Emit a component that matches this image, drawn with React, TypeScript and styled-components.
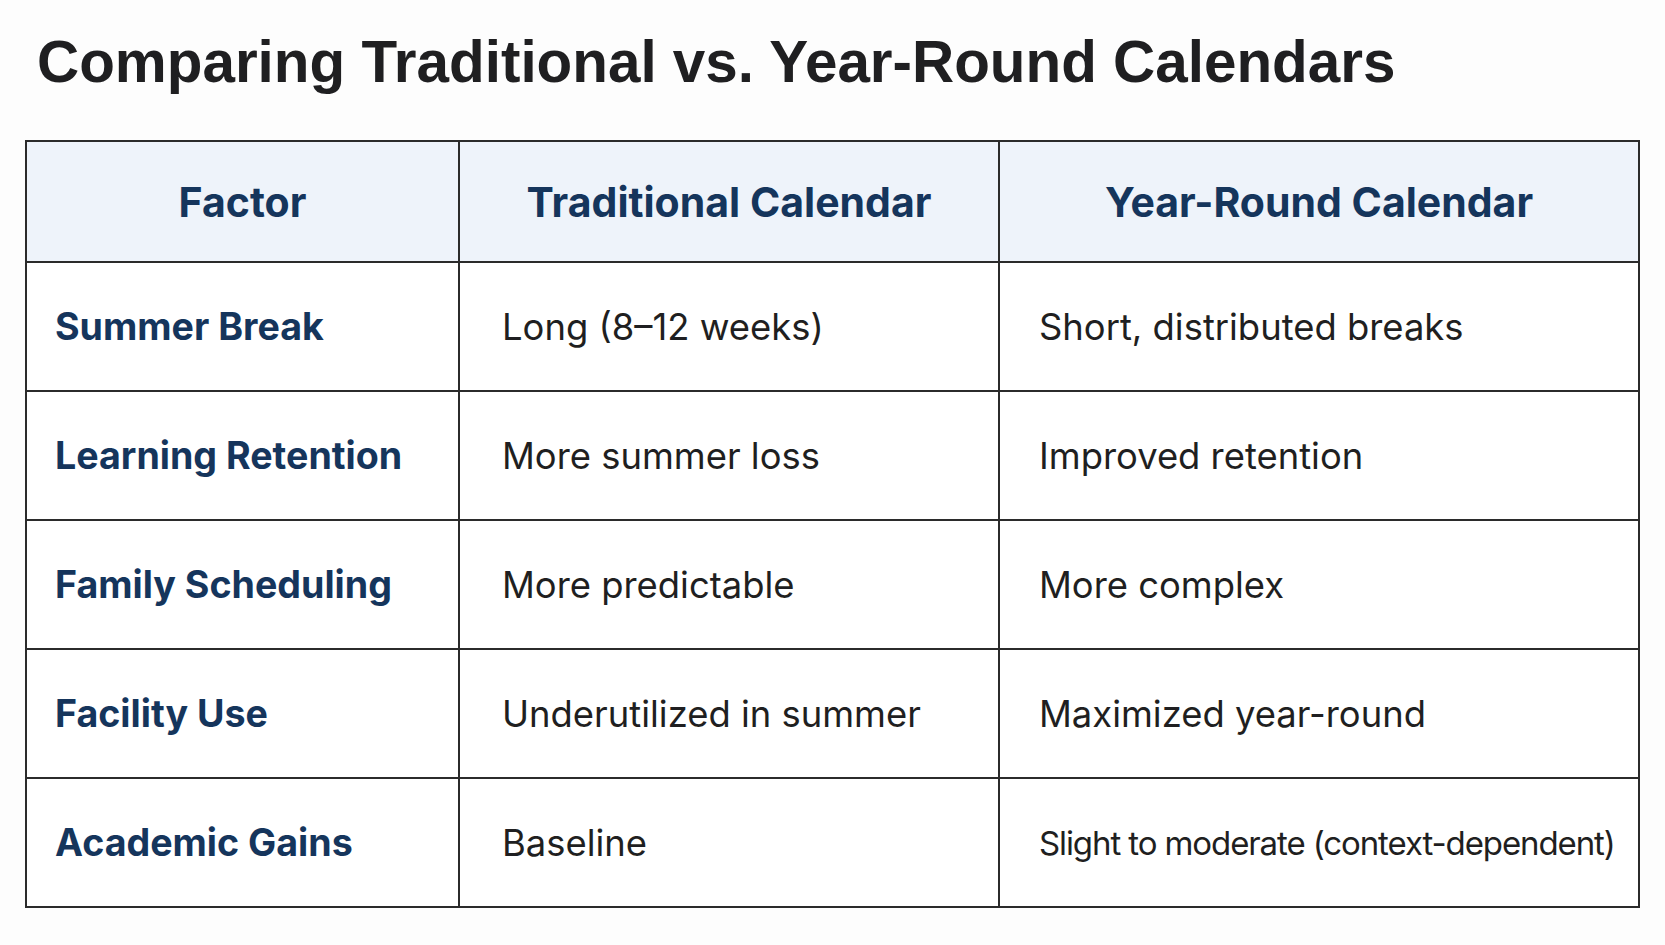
import styled, { createGlobalStyle } from "styled-components";

const GlobalStyle = createGlobalStyle`
  html, body {
    margin: 0;
    padding: 0;
    background: #fdfdfd;
  }
  body {
    font-family: Inter, "Liberation Sans", Arial, sans-serif;
    color: #222;
  }
`;

const Page = styled.div`
  padding: 27px 27px 30px 25px;
`;

const Title = styled.h1`
  margin: 0 0 43px 12px;
  font-family: "Liberation Sans", Arial, sans-serif;
  font-size: 58.4px;
  line-height: 70px;
  font-weight: 700;
  color: #1f1f21;
`;

const Table = styled.table`
  width: 1613px;
  border-collapse: collapse;
  table-layout: fixed;
  background: #fff;
`;

const HeadCell = styled.th`
  height: 119px;
  padding: 0;
  border: 2px solid #2b2b2b;
  background: #eef3fa;
  color: #15355c;
  font-size: 41px;
  font-weight: 700;
  text-align: center;
  vertical-align: middle;
`;

const Cell = styled.td<{ $label?: boolean; $small?: boolean; $pad: number }>`
  height: 127px;
  padding: 0 0 0 ${(p) => p.$pad}px;
  border: 2px solid #2b2b2b;
  vertical-align: middle;
  white-space: nowrap;
  color: ${(p) => (p.$label ? "#15355c" : "#1f1f21")};
  font-weight: ${(p) => (p.$label ? 700 : 400)};
  font-size: ${(p) => (p.$label ? "37.6px" : p.$small ? "33px" : "36.4px")};
  letter-spacing: ${(p) => (p.$small ? "-1.1px" : "0")};
`;

const rows = [
  ["Summer Break", "Long (8–12 weeks)", "Short, distributed breaks"],
  ["Learning Retention", "More summer loss", "Improved retention"],
  ["Family Scheduling", "More predictable", "More complex"],
  ["Facility Use", "Underutilized in summer", "Maximized year-round"],
  ["Academic Gains", "Baseline", "Slight to moderate (context-dependent)"],
];

export default function App() {
  return (
    <Page>
      <GlobalStyle />
      <Title>Comparing Traditional vs. Year-Round Calendars</Title>
      <Table>
        <colgroup>
          <col style={{ width: 433 }} />
          <col style={{ width: 540 }} />
          <col style={{ width: 640 }} />
        </colgroup>
        <thead>
          <tr>
            <HeadCell>Factor</HeadCell>
            <HeadCell>Traditional Calendar</HeadCell>
            <HeadCell>Year-Round Calendar</HeadCell>
          </tr>
        </thead>
        <tbody>
          {rows.map((r) => (
            <tr key={r[0]}>
              <Cell $label $pad={28}>{r[0]}</Cell>
              <Cell $pad={42}>{r[1]}</Cell>
              <Cell $pad={39} $small={r[2].length > 30}>{r[2]}</Cell>
            </tr>
          ))}
        </tbody>
      </Table>
    </Page>
  );
}
